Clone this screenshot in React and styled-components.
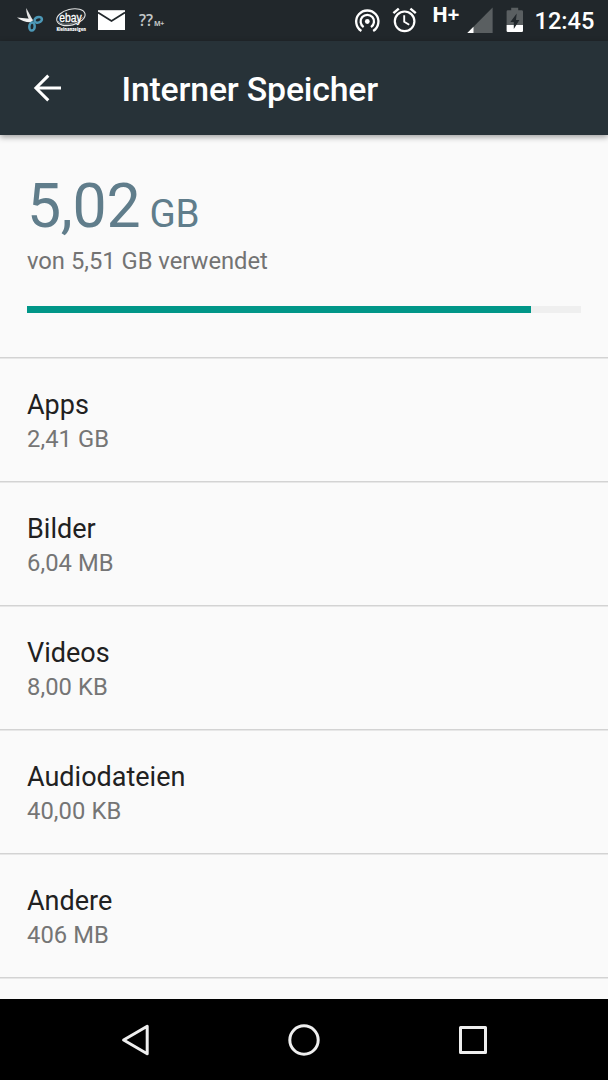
import React from "react";
import styled, { createGlobalStyle } from "styled-components";

const GlobalStyle = createGlobalStyle`
  *, *::before, *::after { box-sizing: border-box; }
  body { margin: 0; background: #000; font-family: Roboto, sans-serif; }
`;

const Screen = styled.div`
  width: 608px;
  height: 1080px;
  display: flex;
  flex-direction: column;
  overflow: hidden;
  background: #fafafa;
`;

const StatusBar = styled.header`
  height: 41px;
  flex: none;
  display: flex;
  justify-content: space-between;
  background: #21272b;
  color: #fff;
`;

const StatusGroup = styled.div`
  display: flex;
  align-items: flex-start;
  padding-left: ${(p) => p.$start || 0}px;
  padding-right: ${(p) => p.$end || 0}px;
`;

const Glyph = styled.svg`
  display: block;
  flex: none;
  overflow: visible;
  margin-right: ${(p) => p.$gap || 0}px;
`;

const Notice = styled.span`
  display: flex;
  align-items: baseline;
  padding-top: 11px;
  font-family: "Open Sans", sans-serif;
  line-height: 19px;
  color: #c4c7c8;
`;

const NoticeMark = styled.span`
  display: inline-block;
  width: ${(p) => p.$width}px;
  font-size: ${(p) => p.$size}px;
  font-weight: ${(p) => p.$weight};
  letter-spacing: ${(p) => p.$tracking || 0}px;
`;

const Network = styled.span`
  width: 35px;
  padding-top: 2px;
  font: 700 21px/24px "Open Sans", sans-serif;
  letter-spacing: -0.6px;
`;

const Clock = styled.time`
  width: 60px;
  padding-top: 7px;
  padding-left: 0.5px;
  font-size: 23.6px;
  line-height: 28px;
  font-weight: 500;
  white-space: nowrap;
`;

const Toolbar = styled.div`
  height: 94px;
  flex: none;
  display: flex;
  align-items: center;
  padding: 0 33px;
  background: #273238;
  color: #fff;
  box-shadow: 0 2px 6px rgba(0, 0, 0, 0.38);
  z-index: 1;
`;

const Title = styled.h1`
  margin: 3px 0 0 59.5px;
  font-size: 33.8px;
  line-height: 40px;
  font-weight: 500;
  letter-spacing: -0.18px;
`;

const Content = styled.main`
  height: 864px;
  flex: none;
  overflow: hidden;
`;

const Summary = styled.section`
  height: 224px;
  padding: 36px 27px 0;
  border-bottom: 1px solid #e7e7e7;
  box-shadow: inset 0 -1px 0 #d3d3d3;
`;

const Total = styled.div`
  height: 72px;
  font-size: 60.8px;
  line-height: 72px;
  color: #607d8b;
  letter-spacing: -0.3px;
  white-space: pre;
`;

const Unit = styled.span`
  font-size: 38.6px;
`;

const Caption = styled.p`
  margin: 4px 0 0;
  font-size: 23.75px;
  line-height: 28px;
  color: #737373;
`;

const Meter = styled.div`
  height: 7px;
  margin-top: 31px;
  background: #efefef;
`;

const MeterFill = styled.div`
  height: 7px;
  background: #009688;
`;

const List = styled.ul`
  margin: 0;
  padding: 0;
  list-style: none;
`;

const Row = styled.li`
  height: 124px;
  padding: 30px 27px 0;
  border-bottom: 1px solid #e7e7e7;
  box-shadow: inset 0 -1px 0 #d3d3d3;
`;

const RowTitle = styled.div`
  font-size: 27px;
  line-height: 32px;
  color: #212121;
`;

const RowValue = styled.div`
  margin-top: 4px;
  font-size: 23.75px;
  line-height: 28px;
  letter-spacing: 0.08px;
  color: #757575;
`;

const NavBar = styled.nav`
  height: 81px;
  flex: none;
  display: flex;
  justify-content: center;
  align-items: center;
  gap: 129px;
  background: #000;
`;

const categories = [
  { name: "Apps", size: "2,41 GB" },
  { name: "Bilder", size: "6,04 MB" },
  { name: "Videos", size: "8,00 KB" },
  { name: "Audiodateien", size: "40,00 KB" },
  { name: "Andere", size: "406 MB" },
];

const usedShare = 504 / 554;

function Scissors() {
  return (
    <Glyph width="28" height="41" viewBox="17 0 28 41" $gap={10} fill="none">
      <path d="M26.2 8 L33 20.5 L30.4 22.5 C28 18 26 13 26.2 8Z" fill="#e4e4e4" />
      <path d="M17 17.5 L32.5 19 L31 22.3 C26 22.5 21 20.7 17 17.5Z" fill="#f2f2f2" />
      <ellipse cx="38.2" cy="19.8" rx="3.8" ry="2.7" transform="rotate(-18 38.2 19.8)" stroke="#4c98b7" strokeWidth="2.5" />
      <ellipse cx="32" cy="26.6" rx="2.7" ry="4" transform="rotate(4 32 26.6)" stroke="#4c98b7" strokeWidth="2.5" />
    </Glyph>
  );
}

function EbayBadge() {
  return (
    <Glyph width="32" height="41" viewBox="55 0 32 41" $gap={11} fill="none">
      <ellipse cx="70.9" cy="17.2" rx="14.5" ry="7.9" transform="rotate(-14 70.9 17.2)" stroke="#e4e5e5" strokeWidth="1.1" />
      <path d="M58 21 C62 27 76 24 83.5 17" stroke="#aeb1b3" strokeWidth="0.7" />
      <text x="59.3" y="21.5" fill="#fff" fontFamily="Liberation Sans, sans-serif" fontSize="12.5" fontWeight="400" stroke="#fff" strokeWidth="0.3" textLength="22.5" lengthAdjust="spacingAndGlyphs">ebay</text>
      <text x="56.4" y="31" fill="#fff" fontFamily="Open Sans, sans-serif" fontSize="5.4" fontWeight="800" textLength="29.5" lengthAdjust="spacingAndGlyphs">Kleinanzeigen</text>
    </Glyph>
  );
}

function Mail() {
  return (
    <Glyph width="27" height="41" viewBox="98 0 27 41" $gap={14}>
      <path d="M98 10.2H125V30H98Z" fill="#fff" />
      <path d="M98 12.4 L111.5 21 L125 12.4" fill="none" stroke="#21272b" strokeWidth="1.8" />
    </Glyph>
  );
}

function Hotspot() {
  return (
    <Glyph width="26" height="41" viewBox="354 0 26 41" $gap={12} fill="none" stroke="#fff" strokeWidth="2.3">
      <path d="M361.4 31 A11.1 11.1 0 1 1 373.2 31" />
      <path d="M363.6 27.1 A6.7 6.7 0 1 1 371 27.1" />
      <circle cx="367.3" cy="21.5" r="2.4" fill="#fff" stroke="none" />
    </Glyph>
  );
}

function Alarm() {
  return (
    <Glyph width="26" height="41" viewBox="392 0 26 41" $gap={14} fill="none" stroke="#fff" strokeWidth="2.2">
      <circle cx="404.6" cy="21.3" r="9.8" />
      <path d="M404.2 15.2V21.8L409.2 24.8" strokeWidth="1.9" />
      <path d="M393.4 13.1L398.8 8.6M410.4 8.6L415.8 13.1" strokeWidth="2.5" />
    </Glyph>
  );
}

function Signal() {
  return (
    <Glyph width="26" height="41" viewBox="467 0 26 41" $gap={13}>
      <path d="M467.3 33L492.6 7.6V33Z" fill="#5a5f61" />
      <path d="M467.3 33L473.5 26.8V33Z" fill="#fff" />
    </Glyph>
  );
}

function Battery() {
  return (
    <Glyph width="17" height="41" viewBox="506 0 17 41" $gap={11}>
      <path d="M507.8 10.2H511.2V7.8H518.2V10.2H521.6Q523 10.2 523 11.6V25H506.6V11.6Q506.6 10.2 507.8 10.2Z" fill="#5a5f61" />
      <path d="M506.6 25H523V30.8Q523 32 521.8 32H507.8Q506.6 32 506.6 30.8Z" fill="#fff" />
      <path d="M516.7 13.5L510.4 22H513.8V29L519.4 20H516Z" fill="#21272b" />
    </Glyph>
  );
}

export default function App() {
  return (
    <>
      <GlobalStyle />
      <Screen>
        <StatusBar>
          <StatusGroup $start={17}>
            <Scissors />
            <EbayBadge />
            <Mail />
            <Notice>
              <NoticeMark $width={15} $size={15.5} $weight={600}>??</NoticeMark>
              <NoticeMark $width={12} $size={7} $weight={700} $tracking={-0.4}>M+</NoticeMark>
            </Notice>
          </StatusGroup>
          <StatusGroup $end={14}>
            <Hotspot />
            <Alarm />
            <Network>H+</Network>
            <Signal />
            <Battery />
            <Clock>12:45</Clock>
          </StatusGroup>
        </StatusBar>
        <Toolbar>
          <Glyph width="29" height="28" viewBox="0 0 29 28" fill="none" stroke="#fff" strokeWidth="3">
            <path d="M28 14H3M15.3 1.6L2.9 14L15.3 26.4" />
          </Glyph>
          <Title>Interner Speicher</Title>
        </Toolbar>
        <Content>
          <Summary>
            <Total>5,02<Unit> GB</Unit></Total>
            <Caption>von 5,51 GB verwendet</Caption>
            <Meter>
              <MeterFill style={{ width: `${usedShare * 100}%` }} />
            </Meter>
          </Summary>
          <List>
            {categories.map((c) => (
              <Row key={c.name}>
                <RowTitle>{c.name}</RowTitle>
                <RowValue>{c.size}</RowValue>
              </Row>
            ))}
          </List>
        </Content>
        <NavBar>
          <Glyph width="40" height="40" viewBox="0 0 40 40" fill="none" stroke="#eee" strokeWidth="3" strokeLinejoin="round">
            <path d="M32.2 6.3V33.7L8.6 20Z" />
          </Glyph>
          <Glyph width="40" height="40" viewBox="0 0 40 40" fill="none" stroke="#eee" strokeWidth="3">
            <circle cx="20" cy="20" r="14.2" />
          </Glyph>
          <Glyph width="40" height="40" viewBox="0 0 40 40" fill="none" stroke="#eee" strokeWidth="3" strokeLinejoin="round">
            <path d="M7.5 7.5H32.5V32.5H7.5Z" />
          </Glyph>
        </NavBar>
      </Screen>
    </>
  );
}
